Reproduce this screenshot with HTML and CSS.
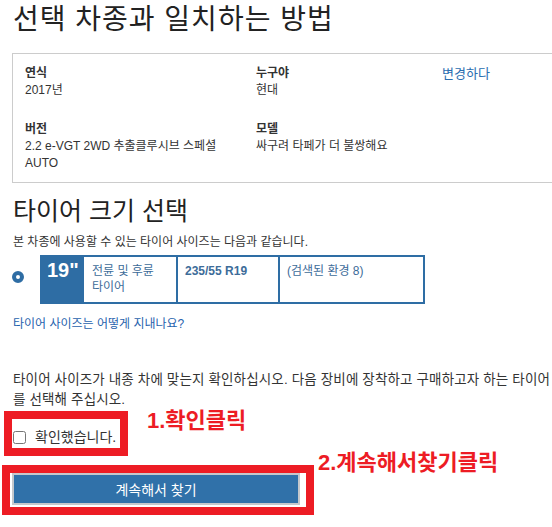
FILE: index.html
```html
<!DOCTYPE html>
<html lang="ko">
<head>
  <meta charset="UTF-8" />
  <meta name="viewport" content="width=device-width, initial-scale=1.0"/>
  <title>타이어 크기 선택</title>
  <link rel="stylesheet" href="styles.css">
</head>
<body>

  <div class="page">
    <h1 class="title">선택 차종과 일치하는 방법</h1>

    <section class="vehicle">
      <div class="field">
        <div class="label">연식</div>
        <div class="value">2017년</div>
      </div>
      <div class="field">
        <div class="label">누구야</div>
        <div class="value">현대</div>
      </div>
      <a href="#" class="change">변경하다</a>
      <div class="field">
        <div class="label">버전</div>
        <div class="value">2.2 e-VGT 2WD 추출클루시브 스페셜 AUTO</div>
      </div>
      <div class="field">
        <div class="label">모델</div>
        <div class="value">싸구려 타페가 더 불쌍해요</div>
      </div>
    </section>

    <h2 class="title">타이어 크기 선택</h2>
    <p class="hint">본 차종에 사용할 수 있는 타이어 사이즈는 다음과 같습니다.</p>

    <div class="tire-option">
      <span class="radio"></span>
      <div class="tire-table">
        <div class="cell size">19"</div>
        <div class="cell axle">전륜 및 후륜 타이어</div>
        <div class="cell spec">235/55 R19</div>
        <div class="cell count">(검색된 환경 8)</div>
      </div>
    </div>

    <a href="#" class="help">타이어 사이즈는 어떻게 지내나요?</a>

    <p class="confirm-text">타이어 사이즈가 내종 차에 맞는지 확인하십시오. 다음 장비에 장착하고 구매하고자 하는 타이어를 선택해 주십시오.</p>

    <div class="step">
      <div class="mark mark-check">
        <label class="check"><input type="checkbox"> 확인했습니다.</label>
      </div>
      <span class="note">1.확인클릭</span>
    </div>

    <div class="step">
      <div class="mark mark-button">
        <button type="button" class="continue">계속해서 찾기</button>
      </div>
      <span class="note note-up">2.계속해서찾기클릭</span>
    </div>
  </div>

</body>
</html>
```

FILE: styles.css
```css
* {
  box-sizing: border-box;
}

html {
  overflow: hidden;
}

body {
  margin: 0;
  padding: 0;
  font-family: "Liberation Sans", "Noto Sans CJK KR", sans-serif;
  color: #333;
  background: #fff;
}

.page {
  padding: 0 0 0 13px;
  width: 640px;
}

.title {
  margin: 0;
  font-size: 28px;
  font-weight: 400;
  line-height: 40px;
  letter-spacing: 1px;
  color: #222;
}

h1.title {
  margin-bottom: 13px;
}

h2.title {
  margin-top: 10px;
  font-size: 25px;
  line-height: 36px;
  letter-spacing: 0;
}

/* vehicle summary */
.vehicle {
  margin-left: -1px;
  border: 1px solid #ccc;
  padding: 11px 12px 10px;
  display: grid;
  grid-template-columns: 210px 165px auto;
  column-gap: 21px;
  row-gap: 22px;
  font-size: 12px;
  line-height: 17px;
}

.vehicle .label {
  font-weight: bold;
  color: #333;
}

.vehicle .change {
  font-size: 13px;
  color: #2a6db0;
  text-decoration: none;
}

.hint {
  margin: 4px 0 0;
  font-size: 12px;
  line-height: 18px;
}

/* tire size option */
.tire-option {
  display: flex;
  align-items: flex-start;
  margin-top: 4px;
}

.radio {
  width: 12px;
  height: 12px;
  margin: 16px 16px 0 -1px;
  border: 4px solid #2e6da4;
  border-radius: 50%;
}

.tire-table {
  display: flex;
  width: 385px;
  height: 49px;
  border: 2px solid #2e6da4;
  color: #3d6c99;
  font-size: 12px;
  line-height: 16px;
}

.cell {
  padding: 6px 7px;
}

.cell + .cell {
  border-left: 2px solid #2e6da4;
}

.size {
  width: 40px;
  padding: 2px 5px;
  background: #2e6da4;
  color: #fff;
  font-size: 20px;
  font-weight: bold;
  line-height: 22px;
}

.axle {
  width: 94px;
  padding-left: 8px;
  word-break: keep-all;
}

.spec {
  width: 102px;
  font-weight: bold;
}

.count {
  flex: 1;
}

.help {
  display: block;
  margin-top: 11px;
  font-size: 12px;
  line-height: 18px;
  color: #1f62ad;
  text-decoration: none;
}

.confirm-text {
  margin: 37px 0 0;
  width: 542px;
  font-size: 13.5px;
  line-height: 20px;
  letter-spacing: 0.15px;
}

/* annotated steps */
.step {
  display: flex;
  align-items: flex-start;
}

.mark {
  border: 8px solid #ed1c24;
}

.mark-check {
  margin: 1px 0 0 -9px;
  width: 124px;
  height: 45px;
  padding: 10px 0 0 1px;
}

.check {
  display: flex;
  align-items: center;
  gap: 9px;
  font-size: 14px;
  line-height: 16px;
}

.check input {
  margin: 0;
  width: 13px;
  height: 13px;
}

.mark-button {
  margin: 9px 0 0 -11px;
  width: 312px;
  height: 50px;
  padding: 0 6px 2px 2px;
}

.continue {
  width: 100%;
  height: 32px;
  border: 2px solid #c4c8cc;
  background: #3071a9;
  color: #fff;
  font-family: "Liberation Sans", "Noto Sans CJK KR", sans-serif;
  font-size: 14px;
  cursor: pointer;
}

.note {
  margin-left: 19px;
  color: #ed1c24;
  font-size: 22px;
  font-weight: bold;
  line-height: 26px;
  margin-top: -2px;
}

.note-up {
  margin-left: 4px;
  margin-top: -6px;
}
```
